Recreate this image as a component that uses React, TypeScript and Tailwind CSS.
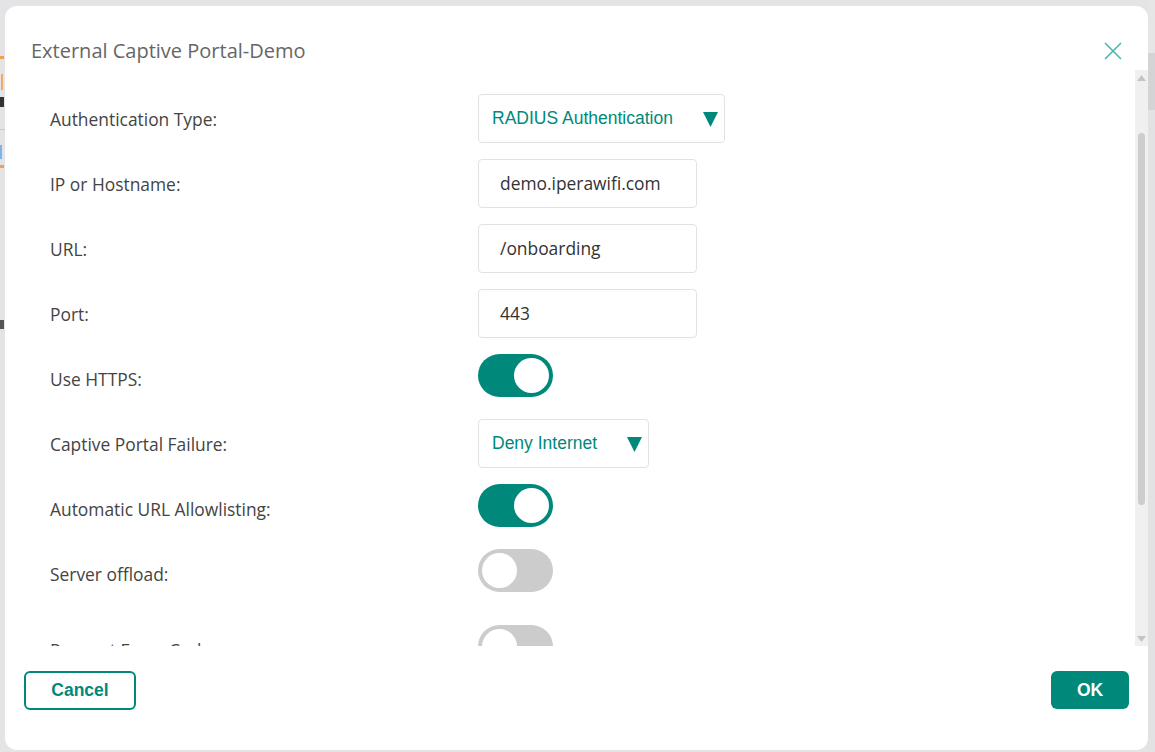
import React from "react";

const openSans = { fontFamily: '"Open Sans", "Noto Sans", sans-serif' };
const arial = { fontFamily: '"Liberation Sans", Arial, sans-serif' };

function Caret() {
  return (
    <svg width="15" height="16" viewBox="0 0 15 16" className="shrink-0">
      <polygon points="0,1 15,1 7.5,16" fill="#00897b" />
    </svg>
  );
}

function Select({ value }: { value: string }) {
  return (
    <div
      className="h-[49px] flex items-center gap-[30px] pl-[13px] pr-[6px] border border-[#e2e2e2] rounded-[4px] bg-white text-[17.5px] text-[#00897b]"
      style={arial}
    >
      <span>{value}</span>
      <Caret />
    </div>
  );
}

function Input({ value }: { value: string }) {
  return (
    <div
      className="h-[49px] w-[219px] flex items-center pl-[21px] border border-[#e2e2e2] rounded-[4px] bg-white text-[17.4px] text-[#333]"
      style={openSans}
    >
      {value}
    </div>
  );
}

function Toggle({ on }: { on: boolean }) {
  return (
    <div
      className={
        "self-start w-[75px] h-[43px] rounded-full flex items-center px-[4px] " +
        (on ? "bg-[#00897b] justify-end" : "bg-[#cccccc] justify-start")
      }
    >
      <div className="w-[35px] h-[35px] rounded-full bg-white" />
    </div>
  );
}

function Row({
  label,
  children,
  extra = "",
}: {
  label: string;
  children: React.ReactNode;
  extra?: string;
}) {
  return (
    <div className={"flex items-center h-[49px] shrink-0 " + extra}>
      <div className="w-[428px] text-[17.4px] leading-[26px] mt-[1px] text-[#444]" style={openSans}>
        {label}
      </div>
      {children}
    </div>
  );
}

export default function App() {
  return (
    <div className="w-[1155px] h-[752px] bg-[#e4e4e6] flex overflow-hidden">
      {/* left strip of background page */}
      <div className="w-[5px] shrink-0 flex flex-col pt-[56px]">
        <div className="h-[3px] w-[4px] bg-[#f0a050]" />
        <div className="h-[16px] w-[3px] mt-[15px] border-r-2 border-[#f0a868]" />
        <div className="h-[10px] w-[4px] mt-[7px] bg-[#333]" />
        <div className="h-[1px] w-[5px] mt-[22px] bg-[#c8c8c8]" />
        <div className="h-[14px] w-[2px] mt-[15px] bg-[#7fb4e8]" />
        <div className="h-[3px] w-[4px] mt-[6px] bg-[#f0a050]" />
        <div className="h-[9px] w-[4px] mt-[152px] bg-[#555]" />
      </div>

      <div className="pt-[6px] shrink-0">
        <div className="w-[1143px] h-[744px] bg-white rounded-[12px] flex flex-col overflow-hidden">
          {/* header */}
          <div className="h-[64px] shrink-0 flex items-start justify-between pt-[30px] pl-[26px] pr-[26px]">
            <div className="text-[20px] leading-[30px] text-[#666]" style={openSans}>
              External Captive Portal-Demo
            </div>
            <div className="h-[30px] flex items-center">
              <svg width="18" height="18" viewBox="0 0 18 18">
                <path d="M1 1 L17 17 M17 1 L1 17" stroke="#4db6ac" strokeWidth="1.6" />
              </svg>
            </div>
          </div>

          {/* body */}
          <div className="h-[576px] shrink-0 flex">
            <div className="flex-1 overflow-hidden pt-[24px] pl-[45px] flex flex-col gap-[16px]">
              <Row label="Authentication Type:">
                <Select value="RADIUS Authentication" />
              </Row>
              <Row label="IP or Hostname:">
                <Input value="demo.iperawifi.com" />
              </Row>
              <Row label="URL:">
                <Input value="/onboarding" />
              </Row>
              <Row label="Port:">
                <Input value="443" />
              </Row>
              <Row label="Use HTTPS:">
                <Toggle on />
              </Row>
              <Row label="Captive Portal Failure:">
                <Select value="Deny Internet" />
              </Row>
              <Row label="Automatic URL Allowlisting:">
                <Toggle on />
              </Row>
              <Row label="Server offload:" extra="mb-[11px]">
                <Toggle on={false} />
              </Row>
              <Row label="Request Every Cycle:">
                <Toggle on={false} />
              </Row>
            </div>
            {/* inner scrollbar */}
            <div className="w-[13px] shrink-0 bg-[#f0f0f0] flex flex-col items-center">
              <div className="h-[16px] flex items-center justify-center">
                <svg width="9" height="6" viewBox="0 0 9 6">
                  <polygon points="0,6 9,6 4.5,0" fill="#c4c4c4" />
                </svg>
              </div>
              <div className="mt-[47px] w-[7px] h-[372px] rounded-full bg-[#cdcdcd]" />
              <div className="flex-1" />
              <div className="h-[14px] flex items-center justify-center">
                <svg width="9" height="6" viewBox="0 0 9 6">
                  <polygon points="0,0 9,0 4.5,6" fill="#c4c4c4" />
                </svg>
              </div>
            </div>
          </div>

          {/* footer */}
          <div className="flex-1 flex items-start justify-between px-[19px] pt-[25px]">
            <button
              className="w-[112px] h-[39px] border-2 border-[#00897b] rounded-[6px] text-[17.5px] font-bold text-[#00897b] bg-white"
              style={arial}
            >
              Cancel
            </button>
            <button
              className="w-[78px] h-[38px] rounded-[6px] text-[17.5px] font-bold text-white bg-[#00897b]"
              style={arial}
            >
              OK
            </button>
          </div>
        </div>
      </div>

      {/* page scrollbar */}
      <div className="w-[7px] shrink-0 flex flex-col">
        <div className="h-[53px] bg-[#e6e6e6]" />
        <div className="h-[57px] bg-[#d4d4d6]" />
        <div className="flex-1 bg-[#e2e2e4]" />
      </div>
    </div>
  );
}
